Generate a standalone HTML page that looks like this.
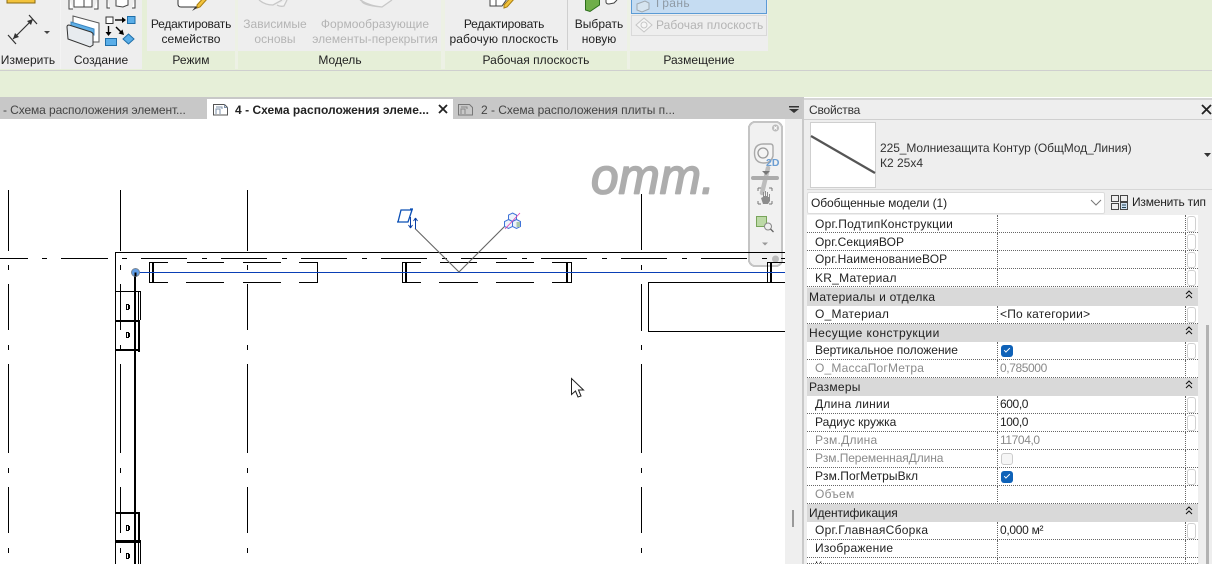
<!DOCTYPE html>
<html><head><meta charset="utf-8">
<style>
html,body{margin:0;padding:0;background:#fff}
#r{position:relative;width:1212px;height:564px;overflow:hidden;background:#fff;font-family:"Liberation Sans","DejaVu Sans",sans-serif;font-size:12px;color:#222}
.a{position:absolute}
.t{position:absolute;white-space:nowrap;line-height:14px}
.c{position:absolute;white-space:nowrap;line-height:14px;transform:translateX(-50%);letter-spacing:.03px}
.d{color:#b4b4b4}
.row{position:absolute;left:807px;width:391px;height:18px;background:#fff;box-sizing:border-box;border-bottom:1px dotted #666}
.row .l{position:absolute;left:8px;top:0;line-height:16px;white-space:nowrap;letter-spacing:.25px}
.row .v{position:absolute;left:193px;top:0;line-height:16px;white-space:nowrap;letter-spacing:-.4px}
.row .s1{position:absolute;left:190px;top:0;bottom:-1px;border-left:1px dotted #666}
.row .s2{position:absolute;left:378px;top:0;bottom:-1px;border-left:1px dotted #666}
.row .w{position:absolute;left:380px;top:1px;width:7px;height:14px;border:1px solid #d0d0d0;border-radius:3px;background:#fff}
.row.g .l,.row.g .v{color:#8a8a8a}
.hd{position:absolute;left:807px;width:391px;height:18px;background:#d9d9d9}
.hd .l{position:absolute;left:2px;top:1px;line-height:16px;white-space:nowrap;letter-spacing:.25px}
.cb{position:absolute;left:194px;top:3px;width:12px;height:12px;border-radius:3px;background:#0f62b8}
.cb:after{content:"";position:absolute;left:3px;top:3px;width:5px;height:2px;border-left:1px solid #fff;border-bottom:1px solid #fff;transform:rotate(-45deg)}
.cb.o{background:#f6f6f6;border:1px solid #ccc;width:10px;height:10px}
.cb.o:after{display:none}
</style></head><body>
<div id="r">
<!-- ribbon -->
<div class="a" style="left:0;top:0;width:1212px;height:70px;background:#e6efd8"></div>
<div class="a" style="left:0;top:0;width:768px;height:69px;background:#eeeeee"></div>
<div class="a" style="left:142px;top:0;width:5px;height:69px;background:#e6efd8"></div>
<div class="a" style="left:60px;top:0;width:1px;height:69px;background:#f3f3f3"></div>
<div class="a" style="left:147px;top:51px;width:88px;height:18px;background:#e6efd8"></div>
<div class="a" style="left:238px;top:51px;width:203px;height:18px;background:#e6efd8"></div>
<div class="a" style="left:445px;top:51px;width:182px;height:18px;background:#e6efd8"></div>
<div class="a" style="left:630px;top:51px;width:138px;height:18px;background:#e6efd8"></div>
<div class="a" style="left:235px;top:0;width:3px;height:69px;background:#edf1e5"></div>
<div class="a" style="left:441px;top:0;width:4px;height:69px;background:#edf1e5"></div>
<div class="a" style="left:627px;top:0;width:3px;height:69px;background:#edf1e5"></div>
<div class="a" style="left:567px;top:0;width:1px;height:50px;background:#cfcfcf"></div>
<div class="a" style="left:0;top:70px;width:1212px;height:1px;background:#cfcfcf"></div>
<div class="a" style="left:0;top:71px;width:1212px;height:26px;background:#e6efd8"></div>

<svg class="a" style="left:0;top:0" width="770" height="52" viewBox="0 0 770 52">
 <rect x="7" y="-3" width="28" height="6" fill="#f3c33c" stroke="#8a6a10"/>
 <path d="M13 39L33 19M8 35L16 44M29 15L37 24" stroke="#333" stroke-width="1.200" fill="none"/>
 <path d="M13 39l6-2-4-4zM33 19l-6 2 4 4z" fill="#333"/>
 <path d="M44 31h6l-3 3z" fill="#444"/>
 <path d="M69 -2v11h4M98 -2v11h-4M74 0v7h10v-7M84 0v7h8v-7" stroke="#444" fill="#fff"/>
 <path d="M107 -2v10h3M135 -2v10h-3M116 0v6l7 1 5-2v-5" stroke="#444" fill="#fff"/>
 <path d="M73 16l26 7v19l-8 0v-10l-18-6z" fill="#fff" stroke="#555"/>
 <path d="M71 22l23 7v6l-23-7z" fill="#5fb0e8" stroke="#3b86c0"/>
 <path d="M67 27q0-2 2-2l22 7q2 1 2 2v11l-3 2-22-8z" fill="#e7ebef" stroke="#333"/>
 <rect x="106" y="17" width="7" height="6.500" fill="#fff" stroke="#333"/>
 <path d="M115 20h8" stroke="#000" stroke-width="1.400"/><path d="M126 20l-4-3v6z"/>
 <rect x="127.500" y="16.500" width="7.500" height="7" fill="#5aaee8" stroke="#1f6ea8"/>
 <path d="M108.500 26v7" stroke="#000" stroke-width="1.400"/><path d="M108.500 36l-3-4h6z"/>
 <path d="M116 27l6 6" stroke="#000" stroke-width="1.400"/><path d="M124 35l-1.500-5.500-4 4z"/>
 <rect x="105.500" y="38.500" width="11" height="7" fill="#5aaee8" stroke="#1f6ea8"/>
 <path d="M128.500 34l5.500 5-5.500 5-5.500-5z" fill="#5aaee8" stroke="#1f6ea8"/>
 <path d="M178 0v4q0 3 3 3h18l4-7" fill="#fff" stroke="#333"/>
 <path d="M197 8l3-1 8-9-3-2-8 9z" fill="#f3c33c" stroke="#a77d10"/><path d="M192 11l5-3-1-2z" fill="#333"/>
 <path d="M259 0q6 5 14 5l9-5M277 5q3 2 7 1l3-6" fill="#f4f4f4" stroke="#c8c8c8" stroke-width="1.300"/>
 <path d="M360 0q10 6 22 7l10-7M362 0q-2 5 20 7" fill="#f4f4f4" stroke="#c8c8c8" stroke-width="1.300"/>
 <path d="M490 -1v7h12l5-7" fill="#fff" stroke="#444"/><path d="M496 0v6" stroke="#444"/>
 <path d="M504 8l3-1 8-9-3-2-8 9z" fill="#f3c33c" stroke="#a77d10"/>
 <path d="M585.500 -1V10L590 11.500L599.500 5V-1z" fill="#6fae49" stroke="#2b6d1a"/>
 <path d="M606 0v2q0 2 3 2l5-1 3-3" fill="#fff" stroke="#444"/>
 <rect x="631.500" y="-2" width="135" height="15.500" fill="#c5dcf2" stroke="#5b9bd5"/>
 <path d="M637 4l8-3 4 2v6l-7 3-5-2z" fill="#d6e4f0" stroke="#9fa8b0"/>
 <rect x="631.500" y="15.500" width="135" height="20" fill="#eeeeee" stroke="#d9d9d9"/>
 <path d="M644 18l8 7-8 7-8-7z" fill="#f6f6f6" stroke="#c6c6c6"/><circle cx="644" cy="25" r="3" fill="none" stroke="#c6c6c6"/>
</svg>
<div class="t" style="left:656px;top:-4px;color:#8f9aa5;letter-spacing:.4px">Грань</div>
<div class="t" style="left:656px;top:18px;color:#b4b4b4;letter-spacing:.05px">Рабочая плоскость</div>

<div class="c" style="left:191px;top:17px;letter-spacing:-.2px">Редактировать</div>
<div class="c" style="left:191px;top:32px">семейство</div>
<div class="c d" style="left:275px;top:17px">Зависимые</div>
<div class="c d" style="left:275px;top:32px">основы</div>
<div class="c d" style="left:375px;top:17px">Формообразующие</div>
<div class="c d" style="left:375px;top:32px">элементы-перекрытия</div>
<div class="c" style="left:504px;top:17px;letter-spacing:-.2px">Редактировать</div>
<div class="c" style="left:504px;top:32px;letter-spacing:.1px">рабочую плоскость</div>
<div class="c" style="left:599px;top:17px">Выбрать</div>
<div class="c" style="left:599px;top:32px">новую</div>
<div class="c" style="left:28px;top:53px">Измерить</div>
<div class="c" style="left:101px;top:53px">Создание</div>
<div class="c" style="left:191px;top:53px">Режим</div>
<div class="c" style="left:340px;top:53px">Модель</div>
<div class="c" style="left:536px;top:53px">Рабочая плоскость</div>
<div class="c" style="left:699px;top:53px">Размещение</div>

<!-- tabs -->
<div class="a" style="left:0;top:97px;width:804px;height:22px;background:#c8c8c8"></div>
<div class="a" style="left:207px;top:99px;width:246px;height:20px;background:#fff"></div>
<div class="t" style="left:3px;top:103px;color:#444;letter-spacing:-.1px">- Схема расположения элемент...</div>
<div class="t" style="left:235px;top:103px;font-weight:bold;color:#222;letter-spacing:.03px">4 - Схема расположения элеме...</div>
<div class="t" style="left:481px;top:103px;color:#444;letter-spacing:-.02px">2 - Схема расположения плиты п...</div>
<svg class="a" style="left:207px;top:97px" width="600" height="22" viewBox="207 97 600 22">
 <path d="M213.500 104.500h11l3 3v7.500h-14z" fill="#fff" stroke="#555"/><path d="M216 114v-5h4v5M216 107h6v2M224.500 104.500v3h3" fill="none" stroke="#7d90a8"/>
 <path d="M439 105l8 8M447 105l-8 8" stroke="#222" stroke-width="1.800"/>
 <path d="M458.500 104.500h11l3 3v7.500h-14z" fill="#c8c8c8" stroke="#777"/><path d="M461 114v-5h4v5M461 107h6v2" fill="none" stroke="#888"/>
 <path d="M789 106h10v1.500h-10z" fill="#333"/><path d="M789 109h10l-5 4z" fill="#333"/>
</svg>

<!-- canvas -->
<svg class="a" style="left:0;top:119px" width="785" height="445" viewBox="0 119 785 445" shape-rendering="crispEdges">
 <!-- nav bar -->
 <rect x="749" y="122" width="33" height="144" rx="6" fill="#f1f1f1" stroke="#c4c4c4" stroke-width="2"/>
 <g shape-rendering="auto">
  <circle cx="775.500" cy="128" r="3.500" fill="#bbb"/><path d="M774 126.500l3 3M777 126.500l-3 3" stroke="#fff"/>
  <path d="M754.500 153q0-9 9-9h7q2.500 0 2.500 3v9q-2 7-9 7-9.500 0-9.500-10z" fill="#f4f4f4" stroke="#aaa" stroke-width="1.400"/>
  <circle cx="763" cy="153" r="5" fill="none" stroke="#999" stroke-width="1.300"/>
  <text x="766" y="166" font-family="Liberation Sans,sans-serif" font-size="10.500" font-weight="bold" fill="#6a9dd2">2D</text>
  <path d="M768 168L762 193" stroke="#bdbdbd" stroke-width="4.500" stroke-linecap="round"/>
  <path d="M762 171h8l-4 4z" fill="#777"/>
  <path d="M753 178h24" stroke="#ababab" stroke-width="4" stroke-linecap="round"/>
  <path d="M758 188h3M758 188v3M769 188h3M772 188v3M758 204v-3M758 204h3M772 204v-3M772 204h-3" stroke="#777" fill="none"/>
  <path d="M761 198l2-1v-5h1v4h1v-5h1v5h1v-4h1v5h1v-3h1v7l-2 3h-5z" fill="#8c8c8c"/>
  <rect x="756.500" y="216.500" width="10" height="10" fill="#bcd9a6" stroke="#78a45a"/>
  <circle cx="768" cy="226.500" r="3.500" fill="#eee" stroke="#888"/><path d="M770.500 229l3 3" stroke="#666" stroke-width="1.300"/>
  <path d="M762 242.500h6l-3 3z" fill="#999"/>
  <circle cx="775.500" cy="259" r="3.500" fill="#bbb"/>
 </g>
 <!-- otm -->
 <g shape-rendering="auto">
  <text transform="translate(591 193.500) scale(.825 .84)" font-family="Liberation Sans,sans-serif" font-style="italic" font-size="60" fill="#adadad" stroke="#adadad" stroke-width="2" stroke-linejoin="round">omm.</text>
 </g>
 <!-- grid -->
 <g stroke="#000" fill="none" stroke-width="1">
  <path d="M8.500 190V251M8.500 265V270M8.500 284V330M8.500 345V350M8.500 364V453M8.500 468V473M8.500 487V533M8.500 548V553"/>
  <path d="M120.500 190V251M120.500 265V270M120.500 284V330M120.500 345V350M120.500 364V453M120.500 468V473M120.500 487V533M120.500 548V553"/>
  <path d="M247.500 190V251M247.500 265V270M247.500 284V330M247.500 345V350M247.500 364V453M247.500 468V473M247.500 487V533M247.500 548V553"/>
  <path d="M641.500 194V250M641.500 265V270M641.500 284V331M641.500 345V350M641.500 364V453M641.500 468V473M641.500 487V533M641.500 548V553"/>
  <path d="M0 258.500H28M42 258.500H47M61 258.500H108M122 258.500H127M141 258.500H187M202 258.500H207M221 258.500H267M282 258.500H287M301 258.500H347M362 258.500H367M381 258.500H427M442 258.500H447M461 258.500H507M522 258.500H527M541 258.500H587M602 258.500H607M621 258.500H667M682 258.500H687M701 258.500H747M762 258.500H767M781 258.500H785"/>
  <path d="M115.500 564V252.500H785"/>
  <!-- wall segments -->
  <path d="M168 262.500H149.500V282.500H168M187 262.500H224M186 282.500H224M243 262.500H281M243 282.500H281M299 262.500H317.500V282.500H299"/>
  <path d="M421 262.500H402.500V282.500H421M440 262.500H477M439 282.500H478M496 262.500H534M496 282.500H534M552 262.500H571.500V282.500H552"/>
  <path d="M785 262.500H767.500V282.500H785"/>
  <path d="M785 282.500H648.500V331.500H785"/>
  <path d="M115 291.500H140.500V320M138.500 291.500V320"/>
  <path d="M115 540.500H140.500V564M138.500 540V564"/>
 </g>
 <g fill="#000" stroke="none">
  <rect x="152" y="263" width="2" height="19"/>
  <rect x="405" y="263" width="2" height="19"/>
  <rect x="566" y="263" width="2" height="19"/>
  <rect x="770" y="263" width="2" height="19"/>
  <rect x="134" y="272" width="2" height="292"/>
  <rect x="115" y="320" width="25" height="2"/>
  <rect x="138" y="320" width="2" height="32"/>
  <rect x="115" y="349" width="25" height="2"/>
  <rect x="115" y="512" width="24" height="2"/>
  <rect x="138" y="512" width="2" height="30"/>
  <rect x="115" y="541" width="25" height="2"/>
  <path d="M126 304h3v1h1v4h-1v1h-3zM127 305v4h1v-4z"/>
  <path d="M126 332h3v1h1v4h-1v1h-3zM127 333v4h1v-4z"/>
  <path d="M126 525h3v1h1v4h-1v1h-3zM127 526v4h1v-4z"/>
  <path d="M126 553h3v1h1v4h-1v1h-3zM127 554v4h1v-4z"/>
 </g>
 <rect x="136" y="272" width="649" height="1" fill="#0a3fb5"/>
 <g shape-rendering="auto">
  <path d="M415 228.500L459 272L505 226" stroke="#666" stroke-width="1.100" fill="none"/>
  <circle cx="135.500" cy="272.500" r="4" fill="#5f9de6" stroke="#7c8794"/>
  <path d="M135.500 272.500v4" stroke="#000" stroke-width="2"/>
  <path d="M401 210h11l-4 12h-10z M397 222h3M410 209h3" fill="none" stroke="#0a4fb5" stroke-width="1.300"/>
  <path d="M410.500 217v11M410.500 228l-2-3M410.500 228l2-3M415.500 229v-11M415.500 218l-2 3M415.500 218l2 3" fill="none" stroke="#0a3fa5" stroke-width="1"/>
  <g stroke="#3f73d8" stroke-width="1" fill="#eef3fb">
   <path d="M512.500 213l4 2v4.500l-4 2-4-2V215z"/>
   <path d="M508.500 219.500l4 2v5l-4 2-4-2v-5z"/>
   <path d="M516.500 219.500l4 2v5l-4 2-4-2v-5z"/>
  </g>
  <rect x="516.500" y="222" width="3.500" height="5" fill="#a9c7a9"/>
  <path d="M505 229l15-16" stroke="#e040b0" stroke-width=".8"/>
  <path d="M571.500 378.500v16l4-3.500 2.500 6 3-1-2.500-6h5z" fill="#fff" stroke="#222" stroke-width="1"/>
 </g>
</svg>

<!-- side strip -->
<div class="a" style="left:785px;top:119px;width:17px;height:445px;background:#efefef"></div>
<div class="a" style="left:792px;top:510px;width:2px;height:17px;background:#999"></div>
<div class="a" style="left:802px;top:99px;width:2px;height:465px;background:#c9c9c9"></div>

<!-- properties -->
<div class="a" style="left:804px;top:98px;width:408px;height:466px;background:#eeeeee"></div>
<div class="a" style="left:804px;top:98px;width:408px;height:2px;background:#d6d6d6"></div>
<div class="t" style="left:809px;top:103px;color:#333;letter-spacing:-.2px">Свойства</div>
<svg class="a" style="left:1200px;top:104px" width="12" height="12"><path d="M2 1l9 9M11 1l-9 9" stroke="#222" stroke-width="1.800"/></svg>
<div class="a" style="left:804px;top:119px;width:408px;height:1px;background:#cfcfcf"></div>
<div class="a" style="left:807px;top:189px;width:405px;height:1px;background:#d6d6d6"></div>
<svg class="a" style="left:810px;top:122px" width="67" height="67"><rect x=".5" y=".5" width="65" height="65" fill="#fff" stroke="#cfcfcf"/><path d="M1 14L65 51" stroke="#555" stroke-width="2.200"/></svg>
<div class="t" style="left:880px;top:141px;color:#333;letter-spacing:-.08px">225_Молниезащита Контур (ОбщМод_Линия)</div>
<div class="t" style="left:880px;top:156px;color:#333">К2 25х4</div>
<svg class="a" style="left:1203px;top:152px" width="9" height="6"><path d="M1 1h7l-3.500 4z" fill="#333"/></svg>
<div class="a" style="left:807px;top:192px;width:298px;height:22px;background:#fff;border-radius:2px;box-shadow:0 0 0 1px #dcdcdc inset"></div>
<div class="t" style="left:811px;top:196px;letter-spacing:-.08px">Обобщенные модели (1)</div>
<svg class="a" style="left:1090px;top:199px" width="12" height="8"><path d="M1 1l5 5 5-5" fill="none" stroke="#777"/></svg>
<svg class="a" style="left:1110px;top:194px" width="20" height="17" fill="none" stroke="#444"><path d="M1.500 1.500h7v6h-7zM1.500 9.500h7v6h-7zM10.500 1.500h7v6h-7z"/><path d="M10.500 8.500h7v7h-7z" fill="#cfe0f2"/><path d="M12 11h4M12 13.500h4" stroke="#245"/></svg>
<div class="t" style="left:1132px;top:195px;letter-spacing:-.2px">Изменить тип</div>
<div class="a" style="left:1206px;top:325px;width:3px;height:239px;background:#b2b2b2"></div>

<div class="row" style="top:215px"><span class="l" style="top:1px">Орг.ПодтипКонструкции</span><i class="s1"></i><i class="s2"></i><i class="w"></i></div>
<div class="row" style="top:233px"><span class="l" style="top:1px;letter-spacing:.1px">Орг.СекцияВОР</span><i class="s1"></i><i class="s2"></i><i class="w"></i></div>
<div class="row" style="top:251px"><span class="l" style="letter-spacing:.1px">Орг.НаименованиеВОР</span><i class="s1"></i><i class="s2"></i><i class="w"></i></div>
<div class="row" style="top:269px"><span class="l" style="top:1px">KR_Материал</span><i class="s1"></i><i class="s2"></i><i class="w"></i></div>
<div class="hd" style="top:288px"><span class="l">Материалы и отделка</span></div>
<div class="row" style="top:306px"><span class="l">О_Материал</span><span class="v" style="letter-spacing:.2px">&lt;По категории&gt;</span><i class="s1"></i><i class="s2"></i><i class="w"></i></div>
<div class="hd" style="top:324px"><span class="l" style="letter-spacing:.45px">Несущие конструкции</span></div>
<div class="row" style="top:342px"><span class="l" style="letter-spacing:-.02px">Вертикальное положение</span><i class="cb"></i><i class="s1"></i><i class="s2"></i><i class="w"></i></div>
<div class="row g" style="top:360px"><span class="l" style="letter-spacing:.18px">О_МассаПогМетра</span><span class="v">0,785000</span><i class="s1"></i><i class="s2"></i></div>
<div class="hd" style="top:378px"><span class="l">Размеры</span></div>
<div class="row" style="top:396px"><span class="l">Длина линии</span><span class="v">600,0</span><i class="s1"></i><i class="s2"></i><i class="w"></i></div>
<div class="row" style="top:414px"><span class="l" style="letter-spacing:0">Радиус кружка</span><span class="v">100,0</span><i class="s1"></i><i class="s2"></i><i class="w"></i></div>
<div class="row g" style="top:432px"><span class="l">Рзм.Длина</span><span class="v">11704,0</span><i class="s1"></i><i class="s2"></i></div>
<div class="row g" style="top:450px"><span class="l" style="letter-spacing:-.1px">Рзм.ПеременнаяДлина</span><i class="cb o"></i><i class="s1"></i><i class="s2"></i></div>
<div class="row" style="top:468px"><span class="l" style="letter-spacing:.05px">Рзм.ПогМетрыВкл</span><i class="cb"></i><i class="s1"></i><i class="s2"></i><i class="w"></i></div>
<div class="row g" style="top:486px"><span class="l">Объем</span><i class="s1"></i><i class="s2"></i></div>
<div class="hd" style="top:504px"><span class="l" style="letter-spacing:-.1px">Идентификация</span></div>
<div class="row" style="top:522px"><span class="l">Орг.ГлавнаяСборка</span><span class="v" style="letter-spacing:-.3px">0,000 м²</span><i class="s1"></i><i class="s2"></i><i class="w"></i></div>
<div class="row" style="top:540px"><span class="l">Изображение</span><i class="s1"></i><i class="s2"></i></div>
<div class="row" style="top:558px;height:6px;overflow:hidden"><span class="l">Комментарии</span><i class="s1"></i><i class="s2"></i></div>
<svg class="a" style="left:1183px;top:288px" width="12" height="240" fill="none" stroke="#111">
 <path d="M3 6l3-3 3 3M3 10l3-3 3 3"/><path transform="translate(0 36)" d="M3 6l3-3 3 3M3 10l3-3 3 3"/><path transform="translate(0 90)" d="M3 6l3-3 3 3M3 10l3-3 3 3"/><path transform="translate(0 216)" d="M3 6l3-3 3 3M3 10l3-3 3 3"/>
</svg>
</div>
</body></html>
